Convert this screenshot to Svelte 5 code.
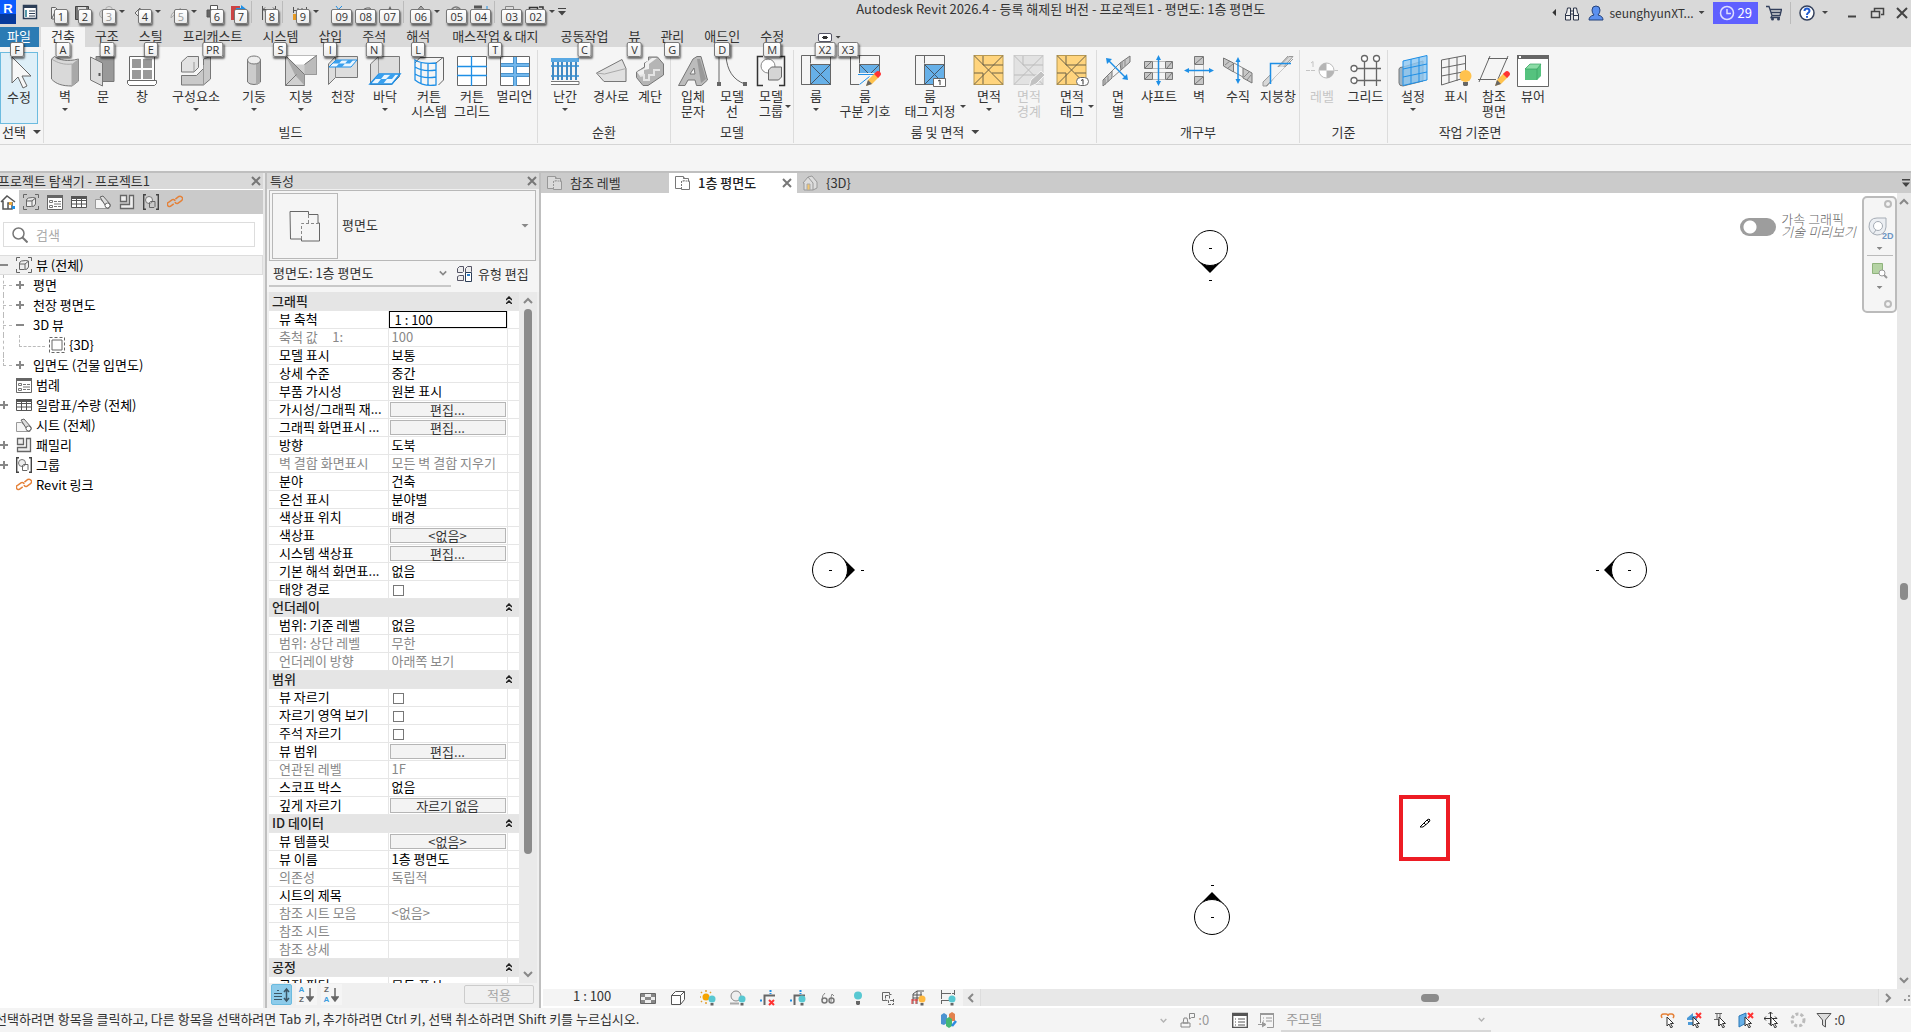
<script lang="ts">
  type Quick = { icon: string; tip: string; caret?: boolean; sep?: boolean; off?: boolean; gap?: boolean };
  type Tool = { label: string[]; icon: string; w: number; caret?: 'below' | 'side'; off?: boolean };
  type Panel = { title: string; tools: Tool[]; more?: boolean };
  type Row = { name: string; value?: string; kind?: 'edit' | 'button' | 'check'; off?: boolean };
  type TreeNode = { text: string; level: number; icon?: string; open?: '+' | '-'; last?: boolean; selected?: boolean };

  const g = '#666';
  const bulb = (c: string) =>
    `<circle cx="12" cy="9" r="3.500" fill="${c}"/><path d="M10.500 13h3v2.500h-3z" fill="#666"/>`;
  const cursor = '<path d="M7 5v9l2-2 2 4 1.500-1-2-3.500h3z" fill="#fff" stroke="#333"/>';
  const redX = '<path d="M10 1l5 5M15 1l-5 5" stroke="#f33" stroke-width="2"/>';
  const pencil =
    '<path d="M17 31l2-6 7-7 4 4-7 7z" fill="#ffc24d"/><path d="M17 31l2-6 4 4z" fill="#666"/><path d="M25 19l2-2q2-2 4 0t0 4l-2 2z" fill="#f33"/>';
  const roomBase = `<path d="M1.500 .5h29v29h-29zM10.500 .5v8M1.500 29.500h9" fill="none" stroke="${g}"/><path d="M10.500 9.500h20v20h-20z" fill="#66b0e8" stroke="${g}"/><path d="M10.500 9.500l20 20M30.500 9.500l-20 20" stroke="#456"/>`;
  const areaBase = `<path d="M1 .5h29v29h-29z" fill="#ffd47d" stroke="#b99a52"/><path d="M1 .5l29 29M30 .5l-29 29M10 1v9h20M1 18h9v11M19 18h11" fill="none" stroke="#6d6248"/>`;
  const planIcon = '<path d="M1.500 1.500h8v2h5v3h1v8h-8v-1h-6z" fill="#fff" fill-opacity=".5" stroke="#777"/><path d="M7.500 14v-8h8M10 2v4" fill="none" stroke="#777" stroke-dasharray="2 1"/>';
  const homeIcon = '<path d="M1 8L7 2l8 6M3 7v8h5M12 8v7h-4V9h3" fill="none" stroke="#555" stroke-width="1.500"/>';

  const icons: Record<string, string> = {
    // ribbon, 32 x 32
    arrow: '<path d="M9 1v26l6-6 5 11 4-2-5-10h9z" fill="#f7f7f7" stroke="#666"/>',
    wall: '<path d="M2.500 4l3-2.500C11 5 18 7 29.500 4v22L23 31C13 31 7 29 2.500 24z" fill="#d9d9d9" stroke="#777"/><path d="M23 9l6.500-5v22L23 31z" fill="#a8a8a8"/><path d="M2.500 4C9 8 15 10 23 9v22" fill="none" stroke="#aaa"/>',
    door: '<path d="M9 1.500h18v25H9z" fill="#999" stroke="#777"/><path d="M3.500 2l12 6v23l-12-6z" fill="#dcdcdc" stroke="#777"/><path d="M12.500 18v3" stroke="#555" stroke-width="2"/>',
    window: '<path d="M3.500 1.500h25v24h-25z" fill="#fff" stroke="#666"/><path d="M6 4h9v9H6zM17 4h9v9h-9zM6 15h9v9H6zM17 15h9v9h-9z" fill="#999"/><path d="M1.500 25.500h29v3l-2 2h-25l-2-2z" fill="#fff" stroke="#666"/>',
    component: '<path d="M1.500 7l6-5.500h11v11L14 17H1.500z" fill="#e2e2e2" stroke="#777"/><path d="M1.500 20.500h15l7-7V4l7-2.500V24l-7 6h-22z" fill="#c9c9c9" stroke="#777"/><path d="M14 7v10M23.500 10v20" stroke="#999"/>',
    column: '<path d="M9.500 5v22a7 4 0 0 0 13 0V5" fill="#ccc" stroke="#777"/><path d="M18 7h4v21l-4 2z" fill="#aaa"/><ellipse cx="16" cy="5" rx="6.500" ry="4" fill="#eee" stroke="#777"/>',
    roof: '<path d="M.5.5h31v19h-12v11H.5z" fill="#d0d0d0" stroke="#777"/><path d="M.5.5h31l-12 9h-9z" fill="#fff"/><path d="M19.500 19.500h12V.5l-12 9z" fill="#bbb"/><path d="M.5.5l10 10 9 9v11L10 20z" fill="#aaa"/><path d="M.5.5l19 19M31.500.5l-12 9M.5 30.500l11-11" stroke="#777"/>',
    ceiling: '<path d="M1.500 9l7-7.500h22v21h-22l-7 7z" fill="#ddd" stroke="#777"/><path d="M8.500 1.500v21" stroke="#888"/><path d="M2 12l7-7h21l-6 7z" fill="#eaf6ff" stroke="#1e8fe6"/><path d="M9 5h6l-3 3.500H6zM21 5h5l-3 3.500h-5zM12 8.500h6L15 12H9z" fill="#39a0ee"/>',
    floor: '<path d="M1.500 9l8-7.500h21v20l-8 8h-21z" fill="#ddd" stroke="#777"/><path d="M9.500 1.500v17" stroke="#999"/><path d="M1 29l9-10h21l-8 10z" fill="#eaf6ff" stroke="#1e8fe6" stroke-width="1.500"/><path d="M10 19h6l-4 5H6zM22 19h5l-4 5h-6zM12 24h6l-4 5H8z" fill="#39a0ee"/>',
    curtain: '<path d="M2 8l5-5.500h23.500V25l-5 5" fill="none" stroke="#666"/><path d="M2 5v20c6 5 14 6 21 5V8C14 9 7 8 2 5zM8 8v20M15 9v21M2 12c6 4 14 4 21 3M2 19c6 4 14 4 21 3" fill="none" stroke="#1e8fe6" stroke-width="1.300"/><path d="M23 8l7-5.500" stroke="#666"/>',
    cgrid: '<path d="M1.500 1.500h29v29h-29z" fill="#fff" stroke="#666"/><path d="M15.500 1v30M1 11.500h30M1 20.500h30" stroke="#1e8fe6" stroke-width="1.300"/>',
    mullion: '<path d="M1.500 1.500h29v29h-29z" fill="#fff" stroke="#666"/><path d="M2 10h28M2 20h28" stroke="#4a93cc" stroke-width="4"/><path d="M16 2v29" stroke="#4a93cc" stroke-width="4"/><path d="M2 10h28M2 20h28M16 2v29" stroke="#72b7ec" stroke-width="2"/>',
    railing: '<path d="M2 3h28v4H2zM2 10h28v2H2zM2 20h28v2H2z" fill="#5aa9e3"/><path d="M4 7v18M9 7v18M13 7v18M18 7v18M22 7v18M27 7v18" stroke="#4189c2" stroke-width="2"/><path d="M2 29.500h28v-3H2" fill="#fff" stroke="#777"/>',
    ramp: '<path d="M1.500 18L27 4.500l4 9v13H9z" fill="#e0e0e0" stroke="#777"/><path d="M1.500 18l8 1L31 13.500" fill="none" stroke="#aaa"/>',
    stair: '<path d="M2.500 17l4-2.500 4-2.500v-4l4-2V2h9l6 7v11L14 30.500H9l-6.500-8z" fill="#b5b5b5" stroke="#777"/><path d="M3 17l8-4V8l7-5h5l-8 6v5l-5 1v5l-4 1z" fill="#f0f0f0"/><path d="M6 21l4-1v5h5v-5h5v-5h6" fill="none" stroke="#e4e4e4" stroke-width="2"/>',
    mtext: '<path d="M1.500 30.500L16 4l4-2.500h4L30.500 25l-6 5.500h-5L18 25h-7l-3 5.500zM13 19h5l-1-6z" fill="#bcbcbc" fill-rule="evenodd" stroke="#777"/><path d="M20 4l4 24 5-4-6-20z" fill="#999"/>',
    mline: '<path d="M3 1v27M10 1c1 14 7 24 19 28" fill="none" stroke="#666"/><path d="M1 27h4v4H1zM27 27h4v4h-4z" fill="#666"/>',
    mgroup: '<path d="M8 1.500H2.500v29H8M24 1.500h5.500v29H24" fill="none" stroke="#333" stroke-width="1.500"/><circle cx="13" cy="11" r="7" fill="#fff" stroke="#888"/><path d="M13.500 15l3-3h10v10l-3 3h-10z" fill="#d5d5d5" stroke="#666"/>',
    room: roomBase,
    roomsep: `${roomBase}<path d="M10 18h21v13H10z" fill="#f5f5f5"/><path d="M10.500 29.500l10-8M9 19.500h20" stroke="#1e8fe6"/>${pencil}`,
    roomtag: `${roomBase}<path d="M19.500 23.500h12v8h-12z" fill="#fff" stroke="#666"/><path d="M24 26l2-1v5" fill="none" stroke="#333"/>`,
    area: areaBase,
    areabound: '<path d="M1 .5h29v29h-29z" fill="#e2e2e2" stroke="#ccc"/><path d="M1 .5l29 29M30 .5l-29 29M10 1v9h20M1 20h29" stroke="#bbb" fill="none"/><path d="M16 32l2-7 10-9 4 4-9 9z" fill="#c2c2c2" stroke="#f5f5f5"/>',
    areatag: `${areaBase}<rect x="20.500" y="22.500" width="12" height="8" rx="4" fill="#fff" stroke="#666"/><path d="M25 25.500l2-1v5" fill="none" stroke="#333"/>`,
    opface: '<path d="M1 25l9-9v7l-9 8zM18 8L28 1v6l-9 8z" fill="#c6c6c6" stroke="#777"/><path d="M3 24v6M6 21v6M20 7v7M23 5v6M10 16l8-8M11 22l8-7" stroke="#888"/><path d="M7 6l16 16" stroke="#1e8fe6" stroke-width="1.500"/><path d="M4 3l6 1-5 5zM26 25l-6-1 5-5z" fill="#1e8fe6"/>',
    opshaft: '<path d="M1.500 6.500h8v7h-8zM22.500 6.500h7v7h-7zM1.500 17.500h8v7h-8zM22.500 17.500h7v7h-7z" fill="#c6c6c6" stroke="#777"/><path d="M2 13l6-6M24 13l5-6M2 24l6-6M24 24l5-6" stroke="#777"/><path d="M10 6.500h12M10 13.500h12M10 17.500h12M10 24.500h12" stroke="#bbb"/><path d="M15.500 3v26" stroke="#1e8fe6" stroke-width="1.500"/><path d="M13 5l2.500-5L18 5zM13 26l2.500 5 2.500-5z" fill="#1e8fe6"/>',
    opwall: '<path d="M11.500 1.500h9v8h-9zM11.500 21.500h9v8h-9z" fill="#c6c6c6" stroke="#777"/><path d="M12 9l8-7M12 29l8-7" stroke="#777"/><path d="M11.500 10v11M20.500 10v11" stroke="#bbb"/><path d="M4 15.500h24" stroke="#1e8fe6" stroke-width="1.500"/><path d="M6 13l-5 2.500L6 18zM26 13l5 2.500-5 2.500z" fill="#1e8fe6"/>',
    opvert: '<path d="M1.500 3l10 5v9l-10-6zM21 13l9 5v10l-9-5z" fill="#c6c6c6" stroke="#777"/><path d="M3 10l5-4M6 13l5-4M22 22l5-5M25 25l4-5M12 8l9 5M12 17l9 5" stroke="#888"/><path d="M16 5v20" stroke="#1e8fe6" stroke-width="1.500"/><path d="M13.500 7L16 2l2.500 5zM13.500 24l2.500 5 2.500-5z" fill="#1e8fe6"/>',
    opdormer: '<path d="M1 27L27 1.500h4L5 31H1zM12 16L26 1M4 31L31 4" fill="#d8d8d8" stroke="#999"/><path d="M9 12h14L9 26z" fill="#f5f5f5"/><path d="M8.500 29V8.500H29" fill="none" stroke="#1e8fe6" stroke-width="1.500"/>',
    level: '<path d="M0 15.500h10M28.500 15.500H32" stroke="#c4c4c4" stroke-dasharray="4 1" fill="none"/><path d="M5 8l2-1.500V12" stroke="#c4c4c4" fill="none"/><circle cx="20.500" cy="15.500" r="7.500" fill="#fff" stroke="#bbb"/><path d="M20.500 8a7.500 7.500 0 0 0-7.500 7.500h7.500zM20.500 23a7.500 7.500 0 0 0 7.500-7.500h-7.500z" fill="#b5b5b5"/>',
    grid: '<path d="M7 13.500h24M7 25.500h24M14.500 6v25M26.500 6v25" stroke="#666" stroke-width="1.300"/><g fill="#fff" stroke="#666" stroke-width="1.300"><circle cx="14.500" cy="3.500" r="3"/><circle cx="26.500" cy="3.500" r="3"/><circle cx="4" cy="13.500" r="3"/><circle cx="4" cy="25.500" r="3"/></g>',
    wpset: '<path d="M2 14q0-2 4-2l20-6v20L6 31q-4 0-4-3z" fill="#9fb4c4" stroke="#777"/><path d="M6 6L30 .5V25L6 30.500z" fill="#8fc8f3" fill-opacity=".8" stroke="#1e8fe6"/><path d="M14 4v25M22 2v25M6 14l24-5M6 22l24-5" stroke="#1e8fe6"/>',
    wpshow: '<path d="M1.500 5l24-4.500v22L1.500 30zM9 4v24M17 2v24M1.500 13l24-4.500M1.500 21l24-4.500" fill="none" stroke="#666"/><circle cx="25.500" cy="21" r="6" fill="#ffc24d"/><path d="M23 27h5v3l-1 1h-3l-1-1z" fill="#666"/>',
    refplane: `<path d="M12 1L1 27M30 1L20 24M10 3.500h20M0 24.500h18" stroke="#666" fill="none"/>${pencil}`,
    viewer: '<path d="M.5 .5h31v31H.5z" fill="#fff" stroke="#666"/><path d="M0 0h32v4H0z" fill="#666"/><path d="M2 1h2v2H2z" fill="#fff"/><path d="M8 14l5-5h11v12l-4 4H8z" fill="#55c27e"/><path d="M8 14l5-5h11l-4 5zM20 14v11" fill="#8bdca6" stroke="#38a061" stroke-width=".7"/>',

    // small, 16 x 16
    props: '<path d="M1.500 1.500h13v13h-13z" fill="#fff" stroke="#2c3e57" stroke-width="1.500"/><path d="M1 1h14v3H1z" fill="#2c3e57"/><path d="M3 6h2v7H3z" fill="#59a"/><path d="M7 7h6M7 9.500h6M7 12h6" stroke="#2c3e57"/>',
    open: '<path d="M1.500 14V2.500h4l2 2h5V7H5zM5 7h10l-3 7H2" fill="#eee" stroke="#666"/>',
    save: '<path d="M1.500 1.500h13v13h-13z" fill="#777" stroke="#444"/><path d="M4 2h8v4H4zM4 9h8v5H4z" fill="#ddd"/>',
    sync: '<circle cx="6" cy="9" r="4.500" fill="#ccc" stroke="#aaa"/><circle cx="11" cy="5" r="3.500" fill="#ddd" stroke="#aaa"/>',
    undo: '<path d="M15 13c0-6-5-8-9-6V3L1 8l5 5V9c4-1 6 1 9 4z" fill="#eee" stroke="#666"/>',
    redo: '<path d="M1 13c0-6 5-8 9-6V3l5 5-5 5V9c-4-1-6 1-9 4z" fill="#ddd" stroke="#aaa"/>',
    print: '<path d="M4.500 5V.5h7V5" fill="#fff" stroke="#555"/><path d="M1 5h14v7H1z" fill="#666" stroke="#555"/><path d="M4.500 9.500h7v5h-7z" fill="#fff" stroke="#666"/>',
    pdf: '<path d="M1 1h9v14H1z" fill="#c44"/><path d="M6 3h5V0l5 4-5 4V5H6z" fill="#1e8fe6"/>',
    dim: '<path d="M1.500 1v14M14.500 1v6M2 4.500h12M4 2.500L2 4.500l2 2M12 2.500l2 2-2 2" fill="none" stroke="#555"/>',
    dim2: '<path d="M1.500 2v6M14.500 2v6M2 5.500h12M6 3v4M10 3v4" fill="none" stroke="#555"/><path d="M1 9h7v6H1z" fill="#e79b24"/>',
    measure: '<path d="M1 8L8 1M2 1l3 4" fill="none" stroke="#1e8fe6"/>',
    tag: '<path d="M2 14V8q4-6 10-5l2 4v7z" fill="#ccc" stroke="#666"/>',
    text: '<path d="M1 15L8 1l7 14h-4l-1-3H6l-1 3z" fill="#666"/>',
    home: '<path d="M1 9l7-8 7 8h-2v6H3V9z" fill="#aaa" stroke="#666"/>',
    section: '<circle cx="7" cy="7" r="5" fill="none" stroke="#777" stroke-width="1.500"/><path d="M7 2L14 7 7 12" fill="#999"/>',
    thin: '<path d="M1 2h8M1 6h8M1 11h12" stroke="#555" stroke-width="3"/><path d="M14 1v14" stroke="#1e8fe6"/>',
    closewin: '<path d="M1.500 1.500h8v8h-8zM4.500 4.500h8v8h-8z" fill="#ddd" stroke="#888"/>',
    switchwin: '<path d="M1.500 2.500h8v7h-8zM11 2h4v5M6 12h8V9" fill="none" stroke="#333" stroke-width="1.500"/>',
    binoculars: '<path d="M2.500 8l1-5h3v12h-5V9zM13.500 8l-1-5h-3v12h5V9zM6.500 6h3v3h-3M1.500 10.500h5M9.500 10.500h5" fill="#eee" stroke="#2a3347"/>',
    user: '<path d="M1 15q0-4 5-5-2-2-2-5 0-4 4-4t4 4q0 3-2 5 5 1 5 5z" fill="#5b90ef" stroke="#24427c"/>',
    clock: '<circle cx="8" cy="8" r="6.500" fill="none" stroke="#ddf" stroke-width="1.500"/><path d="M8 4v4.500h4" fill="none" stroke="#ddf" stroke-width="1.500"/>',
    cart: '<path d="M0 1.500h3l3 9h8l1.500-6H4.500M5 7.500h10M6 10.500l-1 2h9" fill="none" stroke="#33405c" stroke-width="1.300"/><circle cx="6.500" cy="14" r="1.500" fill="#33405c"/><circle cx="12.500" cy="14" r="1.500" fill="#33405c"/>',
    help: '<circle cx="8" cy="8" r="7" fill="#fff" stroke="#33405c" stroke-width="1.500"/><path d="M5.500 6q0-2.500 2.500-2.500T10.500 6q0 1-1.500 2-1 .7-1 2M8 11v1.800" fill="none" stroke="#1f5bd0" stroke-width="2"/>',
    min: '<path d="M4 11.500h8" stroke="#444" stroke-width="2"/>',
    restore: '<path d="M5.500 6V3.500h9v6H12M2.500 6.500h8v6h-8z" fill="none" stroke="#444" stroke-width="1.500"/>',
    close: '<path d="M3 3l10 10M13 3L3 13" stroke="currentColor" stroke-width="2"/>',
    browse: `${homeIcon}<path d="M9 8h3v3H9z" fill="#eaa93a"/><path d="M12 12h3v3h-3z" fill="#1e8fe6"/>`,
    views: '<path d="M4 .5H.5V4M12 .5h3.500V4M4 15.500H.5V12M12 15.500h3.500V12" fill="none" stroke="#666"/><path d="M3.500 6q0-1 2-2 5-1 7 0v6q-1 3-4 2.500h-5zM3.500 7H9l3-2.500M9 7v5" fill="#eee" stroke="#666"/>',
    legend: '<path d="M.5 1.500h15v14H.5z" fill="#fff" stroke="#666"/><path d="M0 1h16v3H0z" fill="#666"/><path d="M2.500 6.500h3v2h-3zM2.500 11.500h3v2h-3zM7 7.500h3M11 7.500h3M7 12.500h3M11 12.500h3M7 10h7" fill="none" stroke="#777"/>',
    schedule: '<path d="M.5 2.500h15v11H.5zM.5 6.500h15M.5 10h15M5.500 3v10M10.500 3v10" fill="#fff" stroke="#555"/><path d="M0 2h16v3H0z" fill="#555"/>',
    sheet: '<path d="M.5 5.500h5L14 14.500H.5z" fill="#f5f5f5" stroke="#999"/><path d="M5 3l3-1 7 8q1 4-3 4z" fill="#ddd" stroke="#666"/><circle cx="12.500" cy="11.500" r="2.500" fill="#fff" stroke="#666"/>',
    family: '<path d="M1.500 1.500h6v6h-6zM10.500 1.500h4v13h-13v-4h9z" fill="#eee" stroke="#666" stroke-width="1.300"/>',
    group: '<path d="M3 .7H.7v14.600H3M13 .7h2.300v14.600H13" fill="none" stroke="#444" stroke-width="1.400"/><circle cx="6" cy="6" r="3.500" fill="#eee" stroke="#777"/><path d="M6.500 8.500l1-1H12v5l-1 1H6.500z" fill="none" stroke="#666"/>',
    link: '<path d="M7 10l-3 3q-2 1-3-1t1-3l3-3q2-1 3 1M8 5l3-3q2-1 3.500.500T14 6l-3 3q-2 1-3-1" fill="none" stroke="#e58138" stroke-width="1.500" transform="rotate(8 8 8)"/>',
    box3d: '<path d="M3 3h10v10H3z" fill="#fff" stroke="#666"/><path d="M.5.5h15v15H.5z" fill="none" stroke="#666" stroke-dasharray="3 2"/>',
    plan: planIcon,
    house: '<path d="M1 8l5-6 5 6v7H2V8zM6 2l4-1 5 6v6l-4 2" fill="#ddd" stroke="#999"/><path d="M5 9h3v6H5z" fill="#f2c56e" stroke="#aaa"/>',
    edittype: '<path d="M1.500 2.500l2-2h4v5l-1 1h-5zM9.500 2.500l2-2h4v5l-1 1h-5zM1.500 10.500l2-1h4v5h-6z" fill="#eee" stroke="#556"/><path d="M9.500 6.500h6v9h-6z" fill="#fff" stroke="#2c3e57"/><path d="M11 8h3v2h-3z" fill="#2c7ec9"/>',
    detail: '<path d="M.5 3.500h15v10H.5z" fill="#eee" stroke="#666"/><path d="M1 4h4v3H1zM11 4h4v3h-4zM5 7h6v3H5zM1 10h4v3H1zM11 10h4v3h-4z" fill="#888"/>',
    style: '<path d="M1.500 5.500l4-4h9v8l-4 5h-9zM1.500 5.500h9v9M10.500 5.500l4-4" fill="#fff" stroke="#555"/>',
    sun: `<circle cx="6" cy="7" r="3.500" fill="#f6a400"/><path d="M6 0v2M6 12v2M0 7h1M1 2l1 1M11 2l-1 1M1 12l1-1" stroke="#e0a030" stroke-width="1.500"/>${bulb('#58c8d2')}`,
    shadow: `<circle cx="6" cy="6" r="5" fill="#eee" stroke="#888"/><path d="M0 13.500h9" stroke="#aaa" stroke-width="2"/>${bulb('#58c8d2')}`,
    crop: '<path d="M4.500 15V5.500H15" fill="none" stroke="#666" stroke-width="2"/><path d="M0 10.500h3M10.500 0v4" stroke="#1e8fe6" stroke-width="2" stroke-dasharray="2 1"/><path d="M9 10l5 5M14 10l-5 5" stroke="#f33" stroke-width="2"/>',
    cropshow: `<path d="M4.500 15V5.500H15" fill="none" stroke="#666" stroke-width="2"/><path d="M0 10.500h3M10.500 0v4" stroke="#1e8fe6" stroke-width="2" stroke-dasharray="2 1"/>${bulb('#58c8d2')}`,
    glasses: '<path d="M5 3q-3 2-3 7M11 12q0-7 1-8l2 2" fill="none" stroke="#888"/><circle cx="4.500" cy="10.500" r="2.500" fill="none" stroke="#777" stroke-width="1.500"/><circle cx="11.500" cy="10.500" r="2.500" fill="none" stroke="#777" stroke-width="1.500"/>',
    bulb: '<circle cx="8" cy="5.500" r="4" fill="#58c8d2"/><path d="M6 11h4v3l-1 1H7l-1-1z" fill="#666"/>',
    props2: '<path d="M2.500 2.500h7v2h2M2.500 2.500v8h3" fill="none" stroke="#666"/><path d="M5.500 5.500h4v3M13.500 9v5.500h-5v-4h5M5.500 5.500v5h2" fill="none" stroke="#666" stroke-dasharray="3 1"/>',
    analytic: `<path d="M3 14V4l4-3h7M3 5h9M7 1v13M11 2v8M3 8h10" fill="none" stroke="#555"/><path d="M2 10h6M2 14V9M6 14V9" stroke="#d33"/>${bulb('#ffb940')}`,
    constraint: `<path d="M1.500 0v14M14.500 0v5M2 3.500h12M2 10.500h7" fill="none" stroke="#666" stroke-dasharray="9 1"/>${bulb('#58c8d2')}`,
    collab: '<path d="M0 3l3-2 3 2v8l-3 2-3-1z" fill="#4b93d1"/><path d="M8 2l3-2 3 2v7H8z" fill="#e2814d"/><path d="M5 7l3-2 3 2v7l-3 2-3-2z" fill="#45b873"/><path d="M11 14l4-5" stroke="#2c8be0" stroke-width="2.500"/>',
    workset: '<path d="M1 15h9v-4H1zM3 11l1-5h3l1 5zM9.500 7V1.500h5v4h-3z" fill="#f5f5f5" stroke="#888"/>',
    listdark: '<path d="M.7 1.500h14.600v14H.7z" fill="#fff" stroke="#555" stroke-width="1.400"/><path d="M0 1h16v3H0z" fill="#555"/><path d="M3 7h1M6 7h7M3 10h1M6 10h7M3 13h1M6 13h7" stroke="#555"/>',
    listadd: '<path d="M2.500 11V1.500h13v14H9" fill="#f5f5f5" stroke="#999"/><path d="M2 1h14v2H2z" fill="#999"/><path d="M5 6h1M8 6h6M5 9h1M8 9h6" stroke="#999"/><path d="M0 12.500h7M4 10l4 2.500L4 15" fill="#999" stroke="#999"/>',
    selLink: `<path d="M2 6q-2-4 2-4h2q2 0 2 2 0-2 2-2h2q3 1 1 4" fill="none" stroke="#e58138" stroke-width="1.500"/>${cursor}`,
    selUnder: `<path d="M1 6l6-5v3h4v4H1zM2 10h6v3H2z" fill="#4b9ad8"/>${cursor}${redX}`,
    selPin: `<path d="M3 1.500h7M5 2v5M8 2v5M2 7.500h8M6.500 8v6" stroke="#666" fill="none"/>${cursor}`,
    selFace: `<path d="M1 4l7-3v10l-7 4z" fill="#66b0e8" stroke="#2a78b8"/>${cursor}${redX}`,
    selDrag: `<path d="M6.500 0v13M0 6.500h13M4.500 2l2-2 2 2M4.500 11l2 2M2 4.500l-2 2 2 2M11 4.500l2 2" stroke="#333" fill="none"/>${cursor}`,
    ring: '<circle cx="8" cy="8" r="6" fill="none" stroke="#bbb" stroke-width="3" stroke-dasharray="3 2"/>',
    filter: '<path d="M1 1.500h14L9.500 8v7l-3-2V8z" fill="#ddd" stroke="#555"/>',
    wheel: '<path d="M1 10q0-9 8-9h9v9q-1 8-9 8-7-1-8-8z" fill="#eceff3" stroke="#a5acb5"/><circle cx="10" cy="9" r="4.500" fill="#fff" stroke="#a5acb5"/><path d="M5 17l3-4" stroke="#a5acb5"/>',
    zoom: '<path d="M.5.5h10v10H.5z" fill="#b5d3a4" stroke="#8fb37c"/><circle cx="10" cy="10" r="3" fill="#fff" stroke="#999"/><path d="M12 12l3 3" stroke="#999" stroke-width="2"/>',
    search: '<circle cx="6.500" cy="6.500" r="5.500" fill="none" stroke="#777" stroke-width="1.500"/><path d="M10.500 10.500l5 5" stroke="#777" stroke-width="2"/>',
    sort1: '<path d="M0 6.500h8M0 9.500h8M0 12.500h8M3 3.500h2" stroke="#3c5666"/><path d="M12.500 2v12M10 5l2.500-3L15 5M10 11l2.500 3 2.500-3" fill="none" stroke="#3c5666" stroke-width="1.500"/>',
    down: '<path d="M4 0v12M1 9l3 4 3-4z" fill="#666" stroke="#666" stroke-width="1.500"/>',

    // dock and tab close mark, 10 x 10
    shut: '<path d="M1 1l8 8M9 1L1 9" stroke="#777" stroke-width="2"/>'
  };

  const quick: Quick[] = [
    { icon: 'open', tip: '1' },
    { icon: 'save', tip: '2' },
    { icon: 'sync', tip: '3', caret: true, off: true },
    { icon: 'undo', tip: '4', caret: true },
    { icon: 'redo', tip: '5', caret: true, off: true },
    { icon: 'print', tip: '6' },
    { icon: 'pdf', tip: '7' },
    { icon: 'dim', tip: '8', sep: true },
    { icon: 'dim2', tip: '9', sep: true, caret: true },
    { icon: 'measure', tip: '09', gap: true },
    { icon: 'tag', tip: '08' },
    { icon: 'text', tip: '07' },
    { icon: 'home', tip: '06', sep: true, caret: true },
    { icon: 'section', tip: '05' },
    { icon: 'thin', tip: '04' },
    { icon: 'closewin', tip: '03', sep: true },
    { icon: 'switchwin', tip: '02', caret: true }
  ];

  const tabs = [
    ['건축', 'A'], ['구조', 'R'], ['스틸', 'E'], ['프리캐스트', 'PR'], ['시스템', 'S'],
    ['삽입', 'I'], ['주석', 'N'], ['해석', 'L'], ['매스작업 & 대지', 'T'], ['공동작업', 'C'],
    ['뷰', 'V'], ['관리', 'G'], ['애드인', 'D'], ['수정', 'M']
  ];

  const panels: Panel[] = [
    {
      title: '빌드',
      tools: [
        { label: ['벽'], icon: 'wall', w: 42, caret: 'below' },
        { label: ['문'], icon: 'door', w: 34 },
        { label: ['창'], icon: 'window', w: 44 },
        { label: ['구성요소'], icon: 'component', w: 64, caret: 'below' },
        { label: ['기둥'], icon: 'column', w: 52, caret: 'below' },
        { label: ['지붕'], icon: 'roof', w: 42, caret: 'below' },
        { label: ['천장'], icon: 'ceiling', w: 42 },
        { label: ['바닥'], icon: 'floor', w: 42, caret: 'below' },
        { label: ['커튼', '시스템'], icon: 'curtain', w: 46 },
        { label: ['커튼', '그리드'], icon: 'cgrid', w: 40 },
        { label: ['멀리언'], icon: 'mullion', w: 45 }
      ]
    },
    {
      title: '순환',
      tools: [
        { label: ['난간'], icon: 'railing', w: 54, caret: 'below' },
        { label: ['경사로'], icon: 'ramp', w: 38 },
        { label: ['계단'], icon: 'stair', w: 40 }
      ]
    },
    {
      title: '모델',
      tools: [
        { label: ['입체', '문자'], icon: 'mtext', w: 44 },
        { label: ['모델', '선'], icon: 'mline', w: 34 },
        { label: ['모델', '그룹'], icon: 'mgroup', w: 44, caret: 'side' }
      ]
    },
    {
      title: '룸 및 면적',
      more: true,
      tools: [
        { label: ['룸'], icon: 'room', w: 44, caret: 'below' },
        { label: ['룸', '구분 기호'], icon: 'roomsep', w: 54 },
        { label: ['룸', '태그 지정'], icon: 'roomtag', w: 76, caret: 'side' },
        { label: ['면적'], icon: 'area', w: 42, caret: 'below' },
        { label: ['면적', '경계'], icon: 'areabound', w: 38, off: true },
        { label: ['면적', '태그'], icon: 'areatag', w: 48, caret: 'side' }
      ]
    },
    {
      title: '개구부',
      tools: [
        { label: ['면', '별'], icon: 'opface', w: 42 },
        { label: ['샤프트'], icon: 'opshaft', w: 40 },
        { label: ['벽'], icon: 'opwall', w: 40 },
        { label: ['수직'], icon: 'opvert', w: 38 },
        { label: ['지붕창'], icon: 'opdormer', w: 42 }
      ]
    },
    {
      title: '기준',
      tools: [
        { label: ['레벨'], icon: 'level', w: 44, off: true },
        { label: ['그리드'], icon: 'grid', w: 43 }
      ]
    },
    {
      title: '작업 기준면',
      tools: [
        { label: ['설정'], icon: 'wpset', w: 50, caret: 'below' },
        { label: ['표시'], icon: 'wpshow', w: 36 },
        { label: ['참조', '평면'], icon: 'refplane', w: 40 },
        { label: ['뷰어'], icon: 'viewer', w: 38 }
      ]
    }
  ];

  const browserTabs = ['browse', 'views', 'legend', 'schedule', 'sheet', 'family', 'group', 'link'];

  const tree: TreeNode[] = [
    { text: '뷰 (전체)', level: 0, icon: 'views', open: '-', selected: true },
    { text: '평면', level: 1, open: '+' },
    { text: '천장 평면도', level: 1, open: '+' },
    { text: '3D 뷰', level: 1, open: '-' },
    { text: '{3D}', level: 2, icon: 'box3d' },
    { text: '입면도 (건물 입면도)', level: 1, open: '+', last: true },
    { text: '범례', level: 0, icon: 'legend' },
    { text: '일람표/수량 (전체)', level: 0, icon: 'schedule', open: '+' },
    { text: '시트 (전체)', level: 0, icon: 'sheet' },
    { text: '패밀리', level: 0, icon: 'family', open: '+' },
    { text: '그룹', level: 0, icon: 'group', open: '+' },
    { text: 'Revit 링크', level: 0, icon: 'link' }
  ];

  const groups: { title: string; rows: Row[] }[] = [
    {
      title: '그래픽',
      rows: [
        { name: '뷰 축척', value: '1 : 100', kind: 'edit' },
        { name: '축척 값     1:', value: '100', off: true },
        { name: '모델 표시', value: '보통' },
        { name: '상세 수준', value: '중간' },
        { name: '부품 가시성', value: '원본 표시' },
        { name: '가시성/그래픽 재...', value: '편집...', kind: 'button' },
        { name: '그래픽 화면표시 ...', value: '편집...', kind: 'button' },
        { name: '방향', value: '도북' },
        { name: '벽 결합 화면표시', value: '모든 벽 결합 지우기', off: true },
        { name: '분야', value: '건축' },
        { name: '은선 표시', value: '분야별' },
        { name: '색상표 위치', value: '배경' },
        { name: '색상표', value: '<없음>', kind: 'button' },
        { name: '시스템 색상표', value: '편집...', kind: 'button' },
        { name: '기본 해석 화면표...', value: '없음' },
        { name: '태양 경로', kind: 'check' }
      ]
    },
    {
      title: '언더레이',
      rows: [
        { name: '범위: 기준 레벨', value: '없음' },
        { name: '범위: 상단 레벨', value: '무한', off: true },
        { name: '언더레이 방향', value: '아래쪽 보기', off: true }
      ]
    },
    {
      title: '범위',
      rows: [
        { name: '뷰 자르기', kind: 'check' },
        { name: '자르기 영역 보기', kind: 'check' },
        { name: '주석 자르기', kind: 'check' },
        { name: '뷰 범위', value: '편집...', kind: 'button' },
        { name: '연관된 레벨', value: '1F', off: true },
        { name: '스코프 박스', value: '없음' },
        { name: '깊게 자르기', value: '자르기 없음', kind: 'button' }
      ]
    },
    {
      title: 'ID 데이터',
      rows: [
        { name: '뷰 템플릿', value: '<없음>', kind: 'button' },
        { name: '뷰 이름', value: '1층 평면도' },
        { name: '의존성', value: '독립적', off: true },
        { name: '시트의 제목', value: '' },
        { name: '참조 시트 모음', value: '<없음>', off: true },
        { name: '참조 시트', value: '', off: true },
        { name: '참조 상세', value: '', off: true }
      ]
    },
    { title: '공정', rows: [{ name: '공정 필터', value: '모두 표시' }] }
  ];

  // elevation marks: position on the drawing in percent, and where the arrow points
  const marks = [
    { x: 49.34, y: 6.95, dx: 0, dy: 1, angle: 90 },
    { x: 21.31, y: 47.4, dx: 1, dy: 0, angle: 0 },
    { x: 80.24, y: 47.3, dx: -1, dy: 0, angle: 180 },
    { x: 49.48, y: 90.9, dx: 0, dy: -1, angle: 270 }
  ];

  const viewTools = ['detail', 'style', 'sun', 'shadow', 'crop', 'cropshow', 'glasses', 'bulb', 'props2', 'analytic', 'constraint'];
  const selectTools = ['selLink', 'selUnder', 'selPin', 'selFace', 'selDrag', 'ring'];

  let query = $state('');
  let scale = $state('1 : 100');
</script>

{#snippet icon(name: string, size = 16)}
  <svg width={size} height={size} viewBox="0 0 {size} {size}" aria-hidden="true">{@html icons[name]}</svg>
{/snippet}

{#snippet chevron(dir: string, size = 10)}
  <svg class="chev {dir}" width={size} height={size} viewBox="0 0 10 10" aria-hidden="true">
    <path d="M1 7l4-4 4 4" fill="none" stroke="#888" stroke-width="2" />
  </svg>
{/snippet}

<div class="app">
  <header>
    <div class="titlebar">
      <button class="logo" aria-label="Revit">R</button>
      <button class="prop-btn" aria-label="특성">{@render icon('props')}</button>
      <div class="quick">
        {#each quick as q (q.tip)}
          {#if q.sep}<i class="sep"></i>{/if}
          <button class:off={q.off} class:gap={q.gap} aria-label={q.icon}>
            {@render icon(q.icon)}<kbd>{q.tip}</kbd>
          </button>
          {#if q.caret}<i class="caret"></i>{/if}
        {/each}
        <i class="caret bar"></i>
      </div>
      <h1>Autodesk Revit 2026.4 - 등록 해제된 버전 - 프로젝트1 - 평면도: 1층 평면도</h1>
      <div class="account">
        <i class="left-tri"></i>
        {@render icon('binoculars')}
        <button class="user">{@render icon('user')}<span>seunghyunXT...</span><i class="caret"></i></button>
        <button class="trial">{@render icon('clock')}<span>29</span></button>
        {@render icon('cart')}
        <i class="sep"></i>
        <button class="help" aria-label="도움말">{@render icon('help')}<i class="caret"></i></button>
      </div>
      <div class="win">
        <button aria-label="최소화">{@render icon('min')}</button>
        <button aria-label="복원">{@render icon('restore')}</button>
        <button aria-label="닫기">{@render icon('close')}</button>
      </div>
    </div>
    <nav class="tabs">
      <button class="file">파일<kbd>F</kbd></button>
      {#each tabs as [name, key], i (key)}
        <button class:active={i === 0} class:roomy={name.includes('&')}>{name}<kbd>{key}</kbd></button>
      {/each}
      <button class="fold" aria-label="리본 최소화"><span></span><kbd>X2</kbd></button>
      <button class="fold-more" aria-label="리본 옵션"><i class="caret"></i><kbd>X3</kbd></button>
    </nav>
  </header>

  <div class="ribbon">
    <section class="panel">
      <div class="tools">
        <button class="tool modify">{@render icon('arrow', 32)}<span>수정</span></button>
      </div>
      <h2>선택<i class="caret big"></i></h2>
    </section>
    {#each panels as panel (panel.title)}
      <section class="panel">
        <div class="tools">
          {#each panel.tools as tool (tool.icon)}
            <button class="tool" class:off={tool.off} style="width: {tool.w}px">
              {@render icon(tool.icon, 32)}
              {#each tool.label as line}<span>{line}</span>{/each}
              {#if tool.caret}<i class="caret {tool.caret}"></i>{/if}
            </button>
          {/each}
        </div>
        <h2>{panel.title}{#if panel.more}<i class="caret big"></i>{/if}</h2>
      </section>
    {/each}
  </div>
  <div class="options"></div>

  <main>
    <aside class="browser">
      <div class="dock-title"><span class="cut">프로젝트 탐색기 - 프로젝트1</span>
        <button aria-label="닫기">{@render icon('shut', 10)}</button></div>
      <div class="browser-tabs">
        {#each browserTabs as name, i (name)}
          <button class:active={i === 0} aria-label={name}>{@render icon(name)}</button>
        {/each}
      </div>
      <label class="search">{@render icon('search')}<input placeholder="검색" bind:value={query} /></label>
      <ul>
        {#each tree as node (node.text)}
          <li class="level{node.level}" class:selected={node.selected} class:last={node.last}>
            {#if node.level > 0}<i class="guide"></i>{/if}
            {#if node.level < 2}<i class="fold-mark" class:plus={node.open === '+'} class:minus={node.open === '-'}></i>{/if}
            {#if node.icon}{@render icon(node.icon)}{/if}
            <span>{node.text}</span>
          </li>
        {/each}
      </ul>
    </aside>

    <aside class="props">
      <div class="dock-title"><span>특성</span>
        <button aria-label="닫기">{@render icon('shut', 10)}</button></div>
      <button class="type">
        <span class="thumb">
          <svg width="32" height="32" viewBox="0 0 32 32" aria-hidden="true">
            <path d="M1 1.500h18.500v3H29v8.500h1.500v18h-18v-2H1.500z" fill="#f5f5f5" stroke="#666" />
            <path d="M12.500 29V13.500h17M19.500 5v8" fill="none" stroke="#888" stroke-dasharray="3 2" />
          </svg>
        </span>
        <span class="type-name">평면도</span>
        <i class="caret big grey"></i>
      </button>
      <div class="instance">
        <button class="pick"><span>평면도: 1층 평면도</span>{@render chevron('down', 8)}</button>
        <button class="edit-type">{@render icon('edittype')}<span>유형 편집</span></button>
      </div>
      <div class="grid-wrap">
        <div class="grid">
          <table>
            <colgroup><col class="c1" /><col class="c2" /><col class="c3" /></colgroup>
            {#each groups as group (group.title)}
              <tbody>
                <tr>
                  <th colspan="3">
                    <div>{group.title}
                      <svg width="6" height="8" viewBox="0 0 6 8" aria-hidden="true">
                        <path d="M0 4l3-3 3 3M0 8l3-3 3 3" fill="none" stroke="#222" stroke-width="1.500" />
                      </svg>
                    </div>
                  </th>
                </tr>
                {#each group.rows as row (row.name)}
                  <tr class:off={row.off}>
                    <td class="name">{row.name}</td>
                    <td>
                      {#if row.kind === 'edit'}
                        <input class="edit" aria-label={row.name} bind:value={scale} />
                      {:else if row.kind === 'button'}
                        <button>{row.value}</button>
                      {:else if row.kind === 'check'}
                        <input type="checkbox" aria-label={row.name} />
                      {:else}
                        <span>{row.value}</span>
                      {/if}
                    </td>
                    <td></td>
                  </tr>
                {/each}
              </tbody>
            {/each}
          </table>
        </div>
        <div class="scroll">
          {@render chevron('up')}
          <div class="track"><i></i></div>
          {@render chevron('down')}
        </div>
      </div>
      <div class="props-foot">
        <button class="sort on" aria-label="그룹 정렬">{@render icon('sort1')}</button>
        <button class="sort" aria-label="오름차순"><span><b>A</b>Z</span>
          <svg width="8" height="14" viewBox="0 0 8 14" aria-hidden="true">{@html icons.down}</svg></button>
        <button class="sort" aria-label="내림차순"><span>Z<b>A</b></span>
          <svg width="8" height="14" viewBox="0 0 8 14" aria-hidden="true">{@html icons.down}</svg></button>
        <button class="apply" disabled>적용</button>
      </div>
    </aside>

    <section class="work">
      <div class="view-tabs">
        <button class="faded">{@render icon('plan')}<span>참조 레벨</span></button>
        <button class="active">{@render icon('plan')}<span>1층 평면도</span>{@render icon('shut', 10)}</button>
        <button>{@render icon('house')}<span>{'{3D}'}</span></button>
        <i class="caret bar"></i>
      </div>
      <div class="stage">
        <div class="canvas">
          {#each marks as m}
            <svg class="mark" style="left: {m.x}%; top: {m.y}%" width="70" height="70" viewBox="-35 -35 70 70" aria-hidden="true">
              <path d="M12.400 -12.400L25 0L12.400 12.400z" transform="rotate({m.angle})" />
              <circle r="17.500" fill="#fff" stroke="#000" />
              <path d="M-1 .5h3" stroke="#000" />
              <path d="M{m.dx * 32 - 1} {m.dy * 32 + 0.5}h3" stroke="#000" />
            </svg>
          {/each}
          <div class="highlight">
            <svg width="12" height="12" viewBox="0 0 12 12" aria-hidden="true">
              <path d="M1 9l7-7 2 2-6 5zM5 5l2 2M8 2l2-1 1 1-1 2" fill="none" stroke="#000" />
            </svg>
          </div>
          <button class="accel"><i></i><span>가속 그래픽<em>기술 미리보기</em></span></button>
          <div class="navbar">
            <i class="dot"></i>
            <div class="wheel">
              {@render icon('wheel', 20)}
              <b>2D</b>
            </div>
            <i class="caret"></i>
            <hr />
            {@render icon('zoom')}
            <i class="caret"></i>
            <i class="dot bottom"></i>
          </div>
        </div>
        <div class="scroll wide">
          {@render chevron('up')}
          <div class="track"><i></i></div>
          {@render chevron('down')}
        </div>
      </div>
      <div class="view-bar">
        <div class="view-tools">
          <button class="scale">1 : 100</button>
          {#each viewTools as name (name)}
            <button aria-label={name}>{@render icon(name)}</button>
          {/each}
        </div>
        <div class="hscroll">
          {@render chevron('left')}
          <div class="htrack"><i></i></div>
          {@render chevron('right')}
        </div>
        <svg class="grip" width="14" height="17" viewBox="0 0 14 17" aria-hidden="true">
          <path d="M11 6h2v2h-2zM11 10h2v2h-2zM7 10h2v2H7z" fill="#999" />
        </svg>
      </div>
    </section>
  </main>

  <footer>
    <p class="hint">선택하려면 항목을 클릭하고, 다른 항목을 선택하려면 Tab 키, 추가하려면 Ctrl 키, 선택 취소하려면 Shift 키를 누르십시오.</p>
    <div class="collab">{@render icon('collab')}</div>
    <div class="worksets">
      {@render chevron('down', 7)}
      <span class="count">{@render icon('workset')}:0</span>
      {@render icon('listdark')}
      {@render icon('listadd')}
      <button class="design"><span>주모델</span>{@render chevron('down', 7)}</button>
    </div>
    <div class="select-tools">
      {#each selectTools as name (name)}
        <button aria-label={name}>{@render icon(name)}</button>
      {/each}
      <button class="filter">{@render icon('filter')}:0</button>
    </div>
  </footer>
</div>

<style>
  :global(body) {
    margin: 0;
    background: #fff;
  }
  .app {
    height: 100vh;
    display: flex;
    flex-direction: column;
    overflow: hidden;
    color: #333;
    font: 13px/16px 'Noto Sans CJK KR', sans-serif;
  }
  .app :global(*) {
    box-sizing: border-box;
  }
  button,
  input {
    margin: 0;
    padding: 0;
    border: 0;
    background: none;
    color: inherit;
    font: inherit;
  }
  button {
    white-space: nowrap;
  }
  h1,
  h2,
  p,
  ul {
    margin: 0;
    padding: 0;
    font: inherit;
    list-style: none;
  }
  svg {
    display: block;
    flex: none;
  }
  .caret {
    flex: none;
    width: 6px;
    height: 3px;
    background: #444;
    clip-path: polygon(0 0, 100% 0, 50% 100%);
  }
  .caret.big {
    width: 8px;
    height: 4px;
  }
  .caret.grey {
    background: #888;
  }
  .caret.bar {
    width: 8px;
    height: 8px;
    clip-path: polygon(0 0, 100% 0, 100% 20%, 0 20%, 0 45%, 100% 45%, 50% 100%, 0 45%);
  }
  .sep {
    flex: none;
    width: 1px;
    height: 22px;
    margin: 0 3px;
    background: #bbb;
  }
  kbd {
    position: absolute;
    z-index: 3;
    min-width: 14px;
    padding: 0 3px;
    border: 1px solid #777;
    border-radius: 2px;
    background: linear-gradient(#fff, #ececec);
    box-shadow: 1px 2px 2px rgba(0, 0, 0, 0.55);
    color: #333;
    font: 11px/13px 'Open Sans', sans-serif;
    text-align: center;
  }

  header {
    background: #d9d9d9;
  }
  .titlebar {
    display: flex;
    height: 27px;
  }
  .logo {
    width: 16px;
    height: 24px;
    padding-bottom: 6px;
    background: linear-gradient(#0b5cff 60%, #063a9c 60%);
    color: #fff;
    font: bold 13px/16px 'Liberation Sans', sans-serif;
  }
  .prop-btn {
    display: flex;
    align-items: center;
    padding: 0 6px 3px;
  }
  .quick {
    display: flex;
    align-items: center;
    height: 23px;
  }
  .quick button {
    position: relative;
    width: 24px;
    height: 23px;
    padding: 3px 0 0 6px;
  }
  .quick button.gap {
    margin-left: 6px;
  }
  .quick kbd {
    top: 9px;
    right: 0;
  }
  .quick .off kbd {
    color: #999;
  }
  .quick .caret {
    margin: 0 3px;
  }
  .quick .caret.bar {
    margin-left: 0;
  }
  h1 {
    flex: 1;
    padding-top: 1px;
    text-align: center;
    white-space: nowrap;
  }
  .account,
  .user,
  .trial,
  .help,
  .win {
    display: flex;
    align-items: center;
  }
  .account {
    height: 25px;
    gap: 8px;
  }
  .account .sep {
    margin: 0;
  }
  .left-tri {
    width: 4px;
    height: 8px;
    background: #333;
    clip-path: polygon(100% 0, 100% 100%, 0 50%);
  }
  .user {
    gap: 5px;
    font-size: 12px;
  }
  .trial {
    height: 22px;
    padding: 0 6px;
    gap: 3px;
    background: #5f60ff;
    color: #fff;
  }
  .help {
    gap: 7px;
  }
  .win {
    height: 25px;
    margin-left: 16px;
    gap: 9px;
    padding-right: 1px;
    color: #444;
  }

  .tabs {
    display: flex;
    height: 20px;
  }
  .tabs button {
    position: relative;
    padding: 0 10px 2px;
    line-height: 18px;
  }
  .tabs button.roomy {
    padding: 0 12px 2px;
  }
  .tabs kbd {
    top: 15px;
    left: 50%;
    transform: translateX(-50%);
  }
  .tabs .file {
    margin-right: 2px;
    padding: 0 8px 2px 7px;
    background: #2b7bb4;
    color: #fff;
  }
  .tabs .file kbd {
    left: 17px;
  }
  .tabs .active {
    background: #f5f5f5;
  }
  .tabs .fold {
    width: 14px;
    margin-left: 24px;
    padding: 0;
  }
  .fold span {
    display: block;
    height: 9px;
    border: 1px solid #556;
    border-radius: 2px;
    background: radial-gradient(#333 30%, #fff 35%);
  }
  .tabs .fold-more {
    width: 20px;
    padding: 0;
  }
  .fold-more .caret {
    display: block;
    margin-left: 3px;
  }
  .tabs .fold-more kbd {
    left: 16px;
  }

  .ribbon {
    display: flex;
    flex: none;
    padding: 3px 0 1px;
    border-bottom: 1px solid #d5d5d5;
    background: #f5f5f5;
  }
  .panel {
    border-right: 1px solid #dcdcdc;
  }
  .panel:last-child {
    border-right: 0;
  }
  .tools {
    display: flex;
    height: 74px;
  }
  .tool {
    position: relative;
    display: flex;
    flex-direction: column;
    align-items: center;
    padding-top: 5px;
    line-height: 15px;
  }
  .tool svg {
    margin-bottom: 1px;
    overflow: visible;
  }
  .tool.off {
    color: #c6c6c6;
  }
  .tool .below {
    margin-top: 5px;
  }
  .tool .side {
    position: absolute;
    right: 2px;
    top: 55px;
  }
  .modify {
    width: 38px;
    height: 72px;
    margin: 2px 5px 0 0;
    padding-top: 3px;
    border: 1px solid #6cbbdf;
    background: #deeff8;
  }
  h2 {
    display: flex;
    align-items: center;
    justify-content: center;
    gap: 7px;
    height: 19px;
    padding-bottom: 3px;
  }
  .options {
    flex: none;
    height: 26px;
    background: #f5f5f5;
  }

  main {
    flex: 1;
    min-height: 0;
    display: flex;
    border-top: 2px solid #bfbfbf;
  }
  .dock-title {
    display: flex;
    flex: none;
    align-items: center;
    justify-content: space-between;
    height: 16px;
    padding: 0 2px 0 3px;
    background: #d9d9d9;
  }
  .cut {
    margin-left: -5px;
  }
  .browser {
    flex: none;
    width: 265px;
    border-right: 2px solid #e8e8e8;
  }
  .browser-tabs {
    display: flex;
    height: 24px;
    margin-top: 1px;
    background: #cacaca;
  }
  .browser-tabs button {
    width: 24px;
    padding-left: 4px;
  }
  .browser-tabs .active {
    width: 19px;
    padding: 0;
    background: #fff;
  }
  .search {
    display: flex;
    align-items: center;
    gap: 8px;
    height: 25px;
    margin: 8px 8px 8px 3px;
    padding-left: 8px;
    border: 1px solid #ddd;
  }
  .search input {
    flex: 1;
    outline: 0;
  }
  .search input::placeholder {
    color: #aaa;
  }
  li {
    display: flex;
    align-items: center;
    height: 20px;
    color: #000;
    white-space: nowrap;
  }
  li.selected {
    border: 1px solid #ddd;
    border-left: 0;
    background: #f1f1f1;
  }
  li svg {
    margin: 0 4px 0 0;
  }
  .fold-mark {
    flex: none;
    position: relative;
    width: 16px;
    height: 8px;
  }
  .level1 .fold-mark {
    width: 17px;
  }
  .plus::before,
  .minus::before {
    content: '';
    position: absolute;
    left: 0;
    top: 3px;
    width: 8px;
    height: 2px;
    background: #888;
  }
  .plus::after {
    content: '';
    position: absolute;
    left: 3px;
    top: 0;
    width: 2px;
    height: 8px;
    background: #888;
  }
  .guide {
    flex: none;
    position: relative;
    width: 16px;
    height: 20px;
  }
  .level2 .guide {
    width: 49px;
  }
  .guide::before,
  .guide::after {
    content: '';
    position: absolute;
    left: 3px;
    top: 0;
    height: 20px;
    border-left: 1px dashed #bbb;
  }
  .last .guide::before {
    height: 11px;
  }
  .guide::after {
    top: 10px;
    width: 9px;
    height: 0;
    border: 0;
    border-top: 1px dashed #bbb;
  }
  .level2 .guide::after {
    left: 19px;
    top: 0;
    width: 25px;
    height: 11px;
    border: 1px dashed #bbb;
    border-width: 0 0 1px 1px;
  }

  .props {
    flex: none;
    display: flex;
    flex-direction: column;
    width: 276px;
    border: solid #bfbfbf;
    border-width: 0 2px;
    background: #f0f0f0;
  }
  .type {
    display: flex;
    align-items: center;
    flex: none;
    height: 71px;
    margin: 1px 3px 0 2px;
    padding: 0 6px 0 2px;
    border: 1px solid #b8b8b8;
    background: #f5f5f5;
    text-align: left;
  }
  .thumb {
    display: grid;
    place-items: center;
    width: 66px;
    height: 66px;
    border: 1px solid #b8b8b8;
  }
  .type-name {
    flex: 1;
    padding: 0 0 2px 4px;
  }
  .instance {
    display: flex;
    flex: none;
    height: 31px;
    padding: 0 2px 5px;
    background: #f5f5f5;
  }
  .pick {
    display: flex;
    align-items: center;
    justify-content: space-between;
    width: 182px;
    padding: 0 4px 0 4px;
    border-bottom: 2px solid #c8c8c8;
  }
  .edit-type {
    display: flex;
    align-items: center;
    gap: 6px;
    padding-left: 5px;
  }
  .grid-wrap {
    flex: 1;
    min-height: 0;
    display: flex;
    padding: 0 2px;
  }
  .grid {
    flex: 1;
    overflow: hidden;
    background: #fff;
  }
  table {
    width: 100%;
    table-layout: fixed;
    border-collapse: collapse;
    color: #000;
  }
  .c1 {
    width: 119px;
  }
  .c3 {
    width: 12px;
  }
  th,
  td {
    height: 18px;
    padding: 0;
    border-bottom: 1px solid #e6e6e6;
    font-weight: normal;
    line-height: 15px;
    text-align: left;
    vertical-align: top;
    white-space: pre;
  }
  th {
    background: #e5e5e5;
    color: #222;
    font-weight: 500;
  }
  th div {
    display: flex;
    align-items: center;
    justify-content: space-between;
    height: 16px;
    padding: 0 7px 0 3px;
    white-space: normal;
  }
  td + td {
    border-left: 1px solid #e6e6e6;
  }
  .name {
    padding-left: 10px;
    overflow: hidden;
  }
  .off td {
    color: #888;
  }
  td span {
    display: block;
    height: 15px;
    padding-left: 3px;
  }
  td button {
    display: block;
    width: 116px;
    height: 15px;
    margin: 1px 1px 0;
    border: 1px solid #b5b5b5;
    background: #f3f3f3;
    color: #333;
    line-height: 13px;
  }
  .edit {
    display: block;
    width: 118px;
    height: 17px;
    padding-left: 5px;
    border: 1px solid #000;
  }
  input[type='checkbox'] {
    appearance: none;
    display: block;
    width: 11px;
    height: 11px;
    margin: 4px 0 0 4px;
    border: 1px solid #777;
  }
  .scroll {
    flex: none;
    display: flex;
    flex-direction: column;
    align-items: center;
    justify-content: space-between;
    width: 18px;
    padding: 4px 0;
    background: #eaeaea;
  }
  .track {
    flex: 1;
    width: 8px;
    padding: 3px 0;
  }
  .track i {
    display: block;
    height: 83%;
    border-radius: 4px;
    background: #8b8b8b;
  }
  .scroll.wide {
    width: 14px;
    background: #e8e8e8;
  }
  .wide .track {
    display: flex;
    align-items: center;
  }
  .wide .track i {
    width: 8px;
    height: 17px;
  }
  .chev.down {
    transform: rotate(180deg);
  }
  .chev.left {
    transform: rotate(-90deg);
  }
  .chev.right {
    transform: rotate(90deg);
  }
  .props-foot {
    display: flex;
    flex: none;
    gap: 4px;
    height: 25px;
    padding: 1px 5px 3px 4px;
  }
  .sort {
    display: flex;
    align-items: center;
    justify-content: center;
    gap: 2px;
    width: 21px;
    background: #f5f5f5;
    color: #666;
    font: bold 8px/10px 'Liberation Sans', sans-serif;
  }
  .sort.on {
    border: 1px solid #6cbbdf;
    border-radius: 2px;
    background: #8dcbea;
  }
  .sort span,
  .sort b {
    display: block;
  }
  .sort b {
    color: #3d9ee0;
  }
  .apply {
    width: 70px;
    height: 19px;
    margin: 1px 0 0 auto;
    border: 1px solid #ccc;
    border-radius: 2px;
    color: #a5a5a5;
    line-height: 15px;
  }

  .work {
    flex: 1;
    min-width: 0;
    display: flex;
    flex-direction: column;
  }
  .view-tabs {
    display: flex;
    align-items: center;
    flex: none;
    height: 20px;
    background: #cbcbcb;
  }
  .view-tabs button {
    display: flex;
    align-items: center;
    gap: 8px;
    width: 128px;
    height: 20px;
    padding: 0 5px;
  }
  .view-tabs .active {
    background: #fff;
    color: #222;
    font-weight: 500;
  }
  .view-tabs .active span {
    flex: 1;
    text-align: left;
  }
  .view-tabs .faded :global(svg) {
    opacity: 0.6;
  }
  .view-tabs .caret {
    margin: 0 1px 0 auto;
  }
  .stage {
    flex: 1;
    min-height: 0;
    display: flex;
  }
  .canvas {
    flex: 1;
    position: relative;
    background: #fff;
  }
  .mark {
    position: absolute;
    margin: -35px 0 0 -35px;
  }
  .highlight {
    position: absolute;
    left: 63.3%;
    top: 75.6%;
    display: grid;
    place-items: center;
    width: 51px;
    height: 66px;
    padding-bottom: 7px;
    border: 4px solid #ed1c24;
  }
  .accel {
    position: absolute;
    top: 19px;
    right: 41px;
    display: flex;
    align-items: center;
    gap: 5px;
    color: #666;
    font-weight: 300;
    line-height: 13px;
    text-align: left;
  }
  .accel > i {
    width: 36px;
    height: 18px;
    margin-top: 4px;
    border-radius: 9px;
    background: radial-gradient(circle at 10px 9px, #fff 6px, #9d9d9d 7px);
  }
  .accel em {
    display: block;
  }
  .navbar {
    position: absolute;
    top: 3px;
    right: 0;
    display: flex;
    flex-direction: column;
    align-items: center;
    gap: 7px;
    width: 35px;
    height: 117px;
    padding-top: 19px;
    border: 2px solid #bbb;
    border-radius: 5px;
    background: #f5f5f5;
  }
  .navbar hr {
    width: 26px;
    margin: -2px 0 0;
    border: 0;
    border-top: 1px solid #bbb;
  }
  .navbar .caret {
    background: #888;
  }
  .wheel {
    position: relative;
    padding: 0 4px 3px 0;
  }
  .wheel b {
    position: absolute;
    right: -2px;
    bottom: -1px;
    color: #6d96c4;
    font: bold 9px/9px 'Liberation Sans', sans-serif;
  }
  .dot {
    position: absolute;
    top: 2px;
    right: 3px;
    width: 8px;
    height: 8px;
    border: 2px solid #bbb;
    border-radius: 50%;
  }
  .dot.bottom {
    top: auto;
    bottom: 3px;
  }
  .view-bar {
    display: flex;
    flex: none;
    height: 17px;
    margin: 0 0 2px 2px;
    background: #f4f4f4;
  }
  .view-tools {
    display: flex;
    gap: 14px;
  }
  .view-tools .scale {
    margin: 0 15px 0 30px;
    padding-bottom: 3px;
    line-height: 14px;
  }
  .hscroll {
    flex: 1;
    display: flex;
    align-items: center;
    margin-left: 7px;
    padding: 0 4px 0 3px;
    gap: 4px;
    background: #ececec;
  }
  .htrack {
    flex: 1;
    display: flex;
    align-items: center;
    justify-content: center;
    height: 17px;
    border: solid #ddd;
    border-width: 0 1px;
    background: #e8e8e8;
  }
  .htrack i {
    width: 18px;
    height: 8px;
    border-radius: 4px;
    background: #8b8b8b;
  }
  .grip {
    background: #ececec;
  }

  footer {
    display: flex;
    align-items: center;
    flex: none;
    height: 24px;
    margin-bottom: 3px;
    background: #f4f4f4;
  }
  .hint {
    width: 941px;
    margin-left: -5px;
    padding-bottom: 2px;
    white-space: nowrap;
  }
  .collab {
    flex: 1;
    padding-left: 5px;
  }
  .worksets,
  .count,
  .design,
  .select-tools,
  .filter {
    display: flex;
    align-items: center;
    gap: 10px;
    color: #999;
  }
  .worksets {
    height: 24px;
  }
  .worksets .chev {
    opacity: 0.6;
  }
  .count {
    gap: 2px;
    margin: 0 13px 0 3px;
  }
  .design {
    align-self: stretch;
    justify-content: space-between;
    width: 210px;
    margin-left: -3px;
    padding: 0 6px 0 5px;
    border-bottom: 2px solid #d8d8d8;
  }
  .select-tools {
    margin: 0 66px 0 169px;
  }
  .filter {
    gap: 2px;
    color: #444;
  }
</style>
